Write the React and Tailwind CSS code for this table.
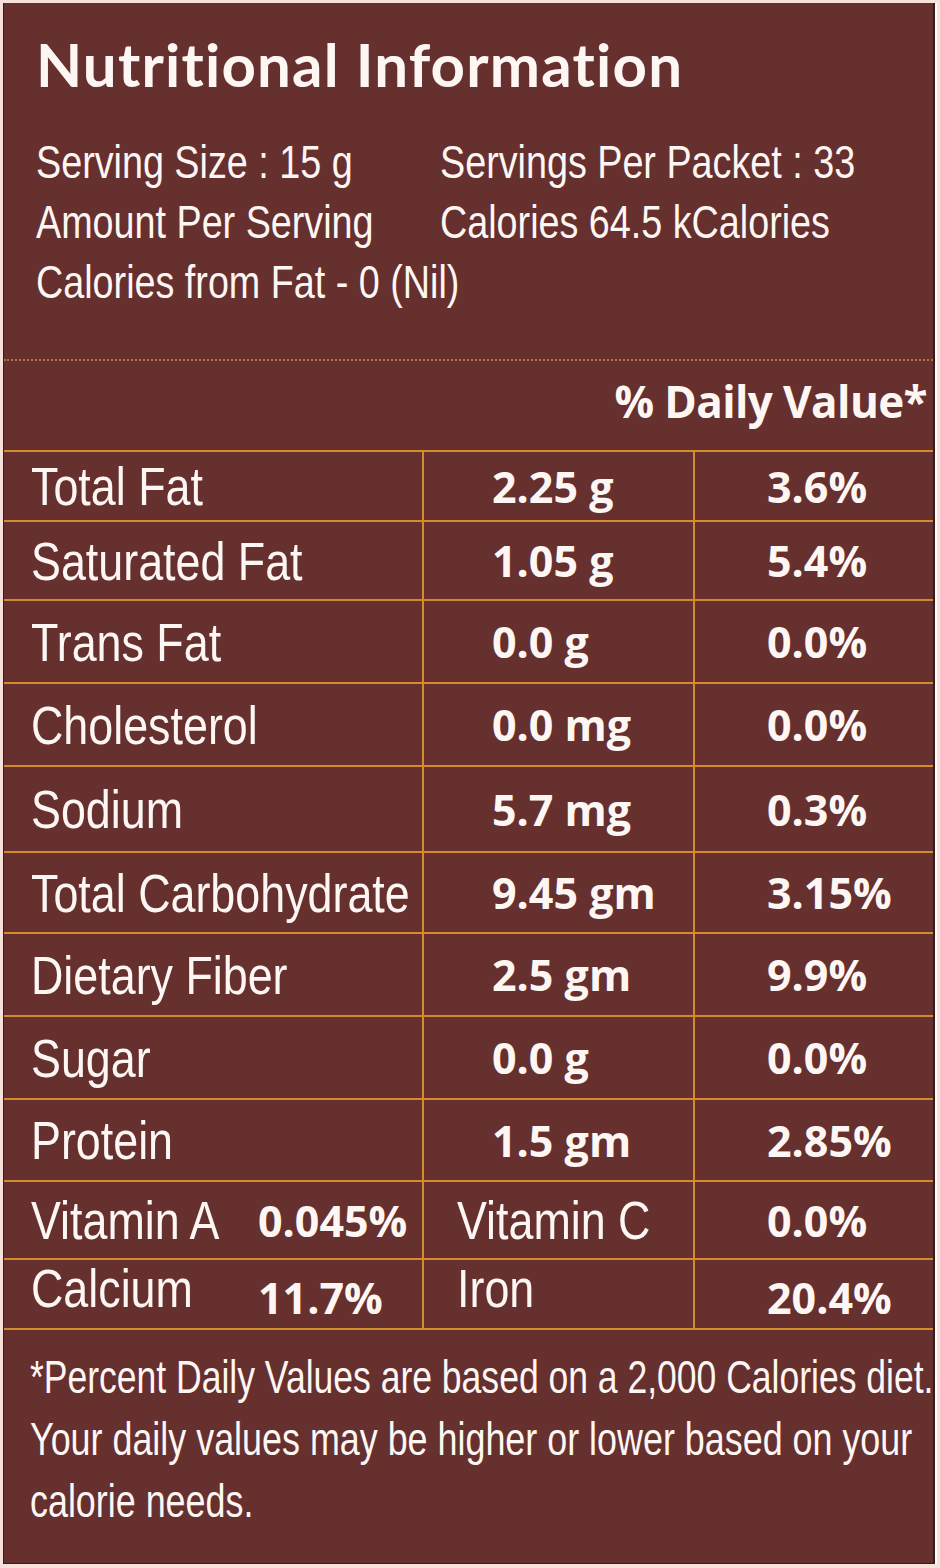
import React from "react";

const narrow = { fontFamily: '"Liberation Sans", Arial, sans-serif' };

const rows = [
  { label: "Total Fat", amt: "2.25 g", dv: "3.6%", h: "h-[72px] border-t-2" },
  { label: "Saturated Fat", amt: "1.05 g", dv: "5.4%", h: "h-[79px]" },
  { label: "Trans Fat", amt: "0.0 g", dv: "0.0%", h: "h-[83px]" },
  { label: "Cholesterol", amt: "0.0 mg", dv: "0.0%", h: "h-[83px]" },
  { label: "Sodium", amt: "5.7 mg", dv: "0.3%", h: "h-[86px]" },
  { label: "Total Carbohydrate", amt: "9.45 gm", dv: "3.15%", h: "h-[81px]" },
  { label: "Dietary Fiber", amt: "2.5 gm", dv: "9.9%", h: "h-[83px]" },
  { label: "Sugar", amt: "0.0 g", dv: "0.0%", h: "h-[83px]" },
  { label: "Protein", amt: "1.5 gm", dv: "2.85%", h: "h-[82px]" },
];

const boldCls = "font-['Open_Sans',sans-serif] font-bold text-[43px] leading-none whitespace-nowrap";
const labelCls = "inline-block origin-left scale-x-[0.83] text-[54px] leading-none whitespace-nowrap";
const headCls = "inline-block origin-left scale-x-[0.82] whitespace-nowrap";
const footCls = "inline-block origin-left scale-x-[0.78] whitespace-nowrap";

export default function App() {
  return (
    <div className="w-[940px] h-[1568px] bg-[#f6e1dc] overflow-hidden">
      <div className="ml-[3px] mt-[3px] w-[932px] h-[1561px] bg-[#66302f] border-l border-l-[#3a1a1a] border-r-2 border-r-[#3a1a1a] border-b border-b-[#3a1a1a] shadow-[2px_0_0_#ffffff] text-[#fdf6f3] flex flex-col">
        {/* header */}
        <div className="pl-[32px] pt-[31px] h-[358px] border-b-2 border-dotted border-b-[#b8742f]">
          <div className="font-['Lato',sans-serif] font-bold text-[60px] leading-[60px] tracking-[1.2px] whitespace-nowrap">
            Nutritional Information
          </div>
          <div className="mt-[38px] text-[46px] leading-[60px]" style={narrow}>
            <div className="flex">
              <div className="w-[404px] shrink-0"><span className={headCls}>Serving Size : 15 g</span></div>
              <div className="shrink-0"><span className={headCls}>Servings Per Packet : 33</span></div>
            </div>
            <div className="flex">
              <div className="w-[404px] shrink-0"><span className={headCls}>Amount Per Serving</span></div>
              <div className="shrink-0"><span className={headCls}>Calories 64.5 kCalories</span></div>
            </div>
            <div className="flex">
              <span className={headCls}>Calories from Fat - 0 (Nil)</span>
            </div>
          </div>
        </div>
        {/* daily value header */}
        <div className="h-[89px] pt-[18px] pr-[6px] flex justify-end">
          <span className="font-['Open_Sans',sans-serif] font-bold text-[44px] leading-[44px] tracking-[-0.6px]">
            % Daily Value*
          </span>
        </div>
        {/* table */}
        <div className="flex flex-col" style={narrow}>
          {rows.map((r) => (
            <div
              key={r.label}
              className={`grid grid-cols-[420px_271px_1fr] border-b-2 border-[#d48b2c] ${r.h}`}
            >
              <div className="border-r-2 border-[#d48b2c] flex items-center pl-[27px]">
                <span className={labelCls}>{r.label}</span>
              </div>
              <div className="border-r-2 border-[#d48b2c] flex items-center pl-[68px]">
                <span className={boldCls}>{r.amt}</span>
              </div>
              <div className="flex items-center pl-[72px]">
                <span className={boldCls}>{r.dv}</span>
              </div>
            </div>
          ))}
          <div className="grid grid-cols-[420px_271px_1fr] border-b-2 border-[#d48b2c] h-[78px]">
            <div className="border-r-2 border-[#d48b2c] flex items-center pl-[27px]">
              <div className="w-[227px] shrink-0"><span className={labelCls}>Vitamin A</span></div>
              <span className={boldCls}>0.045%</span>
            </div>
            <div className="border-r-2 border-[#d48b2c] flex items-center pl-[33px]">
              <span className={labelCls}>Vitamin C</span>
            </div>
            <div className="flex items-center pl-[72px]">
              <span className={boldCls}>0.0%</span>
            </div>
          </div>
          <div className="grid grid-cols-[420px_271px_1fr] border-b-2 border-[#d48b2c] h-[70px]">
            <div className="border-r-2 border-[#d48b2c] flex items-center pl-[27px]">
              <div className="w-[227px] shrink-0 -mt-[12px]"><span className={labelCls}>Calcium</span></div>
              <span className={`${boldCls} mt-[6px]`}>11.7%</span>
            </div>
            <div className="border-r-2 border-[#d48b2c] flex items-center pl-[33px]">
              <span className={`${labelCls} -mt-[12px]`}>Iron</span>
            </div>
            <div className="flex items-center pl-[72px]">
              <span className={`${boldCls} mt-[6px]`}>20.4%</span>
            </div>
          </div>
          {/* footer */}
          <div className="pl-[26px] pt-[16px] text-[46px] leading-[62px]">
            <div><span className="inline-block origin-left scale-x-[0.772] whitespace-nowrap">*Percent Daily Values are based on a 2,000 Calories diet.</span></div>
            <div><span className={footCls}>Your daily values may be higher or lower based on your</span></div>
            <div><span className={footCls}>calorie needs.</span></div>
          </div>
        </div>
      </div>
    </div>
  );
}
